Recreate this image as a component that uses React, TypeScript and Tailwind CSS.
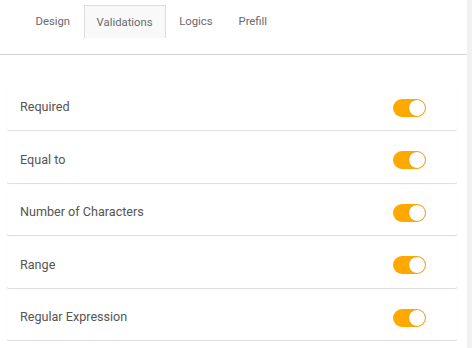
import React from 'react';

const tabs = ['Design', 'Validations', 'Logics', 'Prefill'];
const rules = ['Required', 'Equal to', 'Number of Characters', 'Range', 'Regular Expression'];

const Toggle: React.FC = () => (
  <div className="w-[33px] h-[18px] rounded-full bg-[#ffa800] relative">
    <div className="absolute right-[1px] top-[1px] w-[16px] h-[16px] rounded-full bg-white shadow-[0_0_1px_rgba(0,0,0,0.3)]" />
  </div>
);

export default function App() {
  return (
    <div className="w-[472px] h-[348px] bg-white flex overflow-hidden" style={{ fontFamily: 'Roboto, sans-serif' }}>
      <div className="w-[467px] flex flex-col">
        <div className="h-[55px] border-b border-[#d4d4d4] flex items-start pt-[5px] pl-[23px]">
          {tabs.map((t) => (
            <div
              key={t}
              className={
                t === 'Validations'
                  ? 'h-[33px] px-[12px] pt-[2px] mr-[1px] flex items-center text-[11.3px] text-[#6a6a6a] bg-[#f9f9f9] border border-b-0 border-[#dddddd]'
                  : 'h-[33px] px-[12.5px] pt-[2px] mr-[1px] flex items-center text-[11.3px] text-[#6a6a6a]'
              }
            >
              {t}
            </div>
          ))}
        </div>
        <div className="flex flex-col gap-[7.5px] pt-[30px] pl-[7px] pr-[10px]">
          {rules.map((r) => (
            <div
              key={r}
              className="h-[45px] bg-white rounded-[2px] flex items-center justify-between pl-[13px] pr-[31px] shadow-[0_1px_1px_rgba(0,0,0,0.14)]"
            >
              <span className="text-[12.6px] text-[#555]">{r}</span>
              <Toggle />
            </div>
          ))}
        </div>
      </div>
      <div className="flex-1 bg-[#f1f1f1]" />
    </div>
  );
}
